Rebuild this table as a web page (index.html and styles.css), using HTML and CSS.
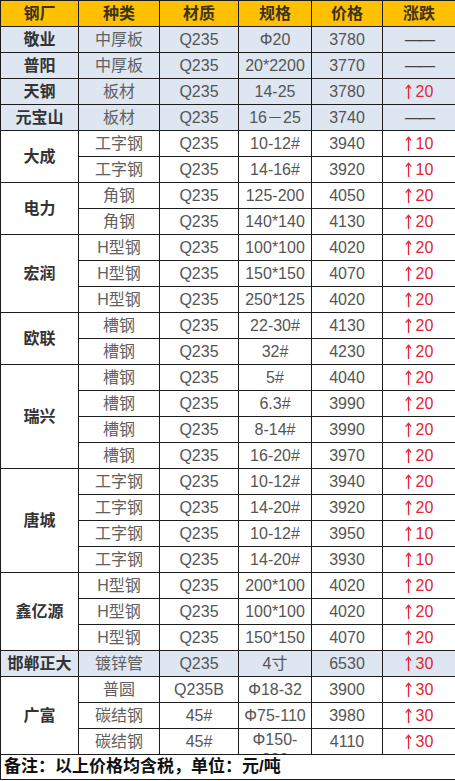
FILE: index.html
```html
<!DOCTYPE html>
<html lang="zh">
<head>
<meta charset="utf-8">
<title>钢材价格</title>
<link rel="stylesheet" href="styles.css">
</head>
<body>
<table class="price">
<colgroup>
<col class="c1"><col class="c2"><col class="c3"><col class="c4"><col class="c5"><col class="c6">
</colgroup>
<thead>
<tr class="head"><th>钢厂</th><th>种类</th><th>材质</th><th>规格</th><th>价格</th><th>涨跌</th></tr>
</thead>
<tbody>
<tr class="blue"><td class="mill">敬业</td><td class="cjk">中厚板</td><td>Q235</td><td>Φ20</td><td>3780</td><td class="flat">——</td></tr>
<tr class="blue"><td class="mill">普阳</td><td class="cjk">中厚板</td><td>Q235</td><td>20*2200</td><td>3770</td><td class="flat">——</td></tr>
<tr class="blue"><td class="mill">天钢</td><td class="cjk">板材</td><td>Q235</td><td>14-25</td><td>3780</td><td class="up"><svg class="arr" viewBox="0 0 7 15" aria-label="↑"><path d="M3.5 15V1.2M0.8 4.6L3.5 1.2L6.2 4.6"/></svg>20</td></tr>
<tr class="blue"><td class="mill">元宝山</td><td class="cjk">板材</td><td>Q235</td><td>16－25</td><td>3740</td><td class="flat">——</td></tr>

<tr><td class="mill" rowspan="2">大成</td><td class="cjk">工字钢</td><td>Q235</td><td>10-12#</td><td>3940</td><td class="up"><svg class="arr" viewBox="0 0 7 15" aria-label="↑"><path d="M3.5 15V1.2M0.8 4.6L3.5 1.2L6.2 4.6"/></svg>10</td></tr>
<tr><td class="cjk">工字钢</td><td>Q235</td><td>14-16#</td><td>3920</td><td class="up"><svg class="arr" viewBox="0 0 7 15" aria-label="↑"><path d="M3.5 15V1.2M0.8 4.6L3.5 1.2L6.2 4.6"/></svg>10</td></tr>

<tr><td class="mill" rowspan="2">电力</td><td class="cjk">角钢</td><td>Q235</td><td>125-200</td><td>4050</td><td class="up"><svg class="arr" viewBox="0 0 7 15" aria-label="↑"><path d="M3.5 15V1.2M0.8 4.6L3.5 1.2L6.2 4.6"/></svg>20</td></tr>
<tr><td class="cjk">角钢</td><td>Q235</td><td>140*140</td><td>4130</td><td class="up"><svg class="arr" viewBox="0 0 7 15" aria-label="↑"><path d="M3.5 15V1.2M0.8 4.6L3.5 1.2L6.2 4.6"/></svg>20</td></tr>

<tr><td class="mill" rowspan="3">宏润</td><td class="cjk">H型钢</td><td>Q235</td><td>100*100</td><td>4020</td><td class="up"><svg class="arr" viewBox="0 0 7 15" aria-label="↑"><path d="M3.5 15V1.2M0.8 4.6L3.5 1.2L6.2 4.6"/></svg>20</td></tr>
<tr><td class="cjk">H型钢</td><td>Q235</td><td>150*150</td><td>4070</td><td class="up"><svg class="arr" viewBox="0 0 7 15" aria-label="↑"><path d="M3.5 15V1.2M0.8 4.6L3.5 1.2L6.2 4.6"/></svg>20</td></tr>
<tr><td class="cjk">H型钢</td><td>Q235</td><td>250*125</td><td>4020</td><td class="up"><svg class="arr" viewBox="0 0 7 15" aria-label="↑"><path d="M3.5 15V1.2M0.8 4.6L3.5 1.2L6.2 4.6"/></svg>20</td></tr>

<tr><td class="mill" rowspan="2">欧联</td><td class="cjk">槽钢</td><td>Q235</td><td>22-30#</td><td>4130</td><td class="up"><svg class="arr" viewBox="0 0 7 15" aria-label="↑"><path d="M3.5 15V1.2M0.8 4.6L3.5 1.2L6.2 4.6"/></svg>20</td></tr>
<tr><td class="cjk">槽钢</td><td>Q235</td><td>32#</td><td>4230</td><td class="up"><svg class="arr" viewBox="0 0 7 15" aria-label="↑"><path d="M3.5 15V1.2M0.8 4.6L3.5 1.2L6.2 4.6"/></svg>20</td></tr>

<tr><td class="mill" rowspan="4">瑞兴</td><td class="cjk">槽钢</td><td>Q235</td><td>5#</td><td>4040</td><td class="up"><svg class="arr" viewBox="0 0 7 15" aria-label="↑"><path d="M3.5 15V1.2M0.8 4.6L3.5 1.2L6.2 4.6"/></svg>20</td></tr>
<tr><td class="cjk">槽钢</td><td>Q235</td><td>6.3#</td><td>3990</td><td class="up"><svg class="arr" viewBox="0 0 7 15" aria-label="↑"><path d="M3.5 15V1.2M0.8 4.6L3.5 1.2L6.2 4.6"/></svg>20</td></tr>
<tr><td class="cjk">槽钢</td><td>Q235</td><td>8-14#</td><td>3990</td><td class="up"><svg class="arr" viewBox="0 0 7 15" aria-label="↑"><path d="M3.5 15V1.2M0.8 4.6L3.5 1.2L6.2 4.6"/></svg>20</td></tr>
<tr><td class="cjk">槽钢</td><td>Q235</td><td>16-20#</td><td>3970</td><td class="up"><svg class="arr" viewBox="0 0 7 15" aria-label="↑"><path d="M3.5 15V1.2M0.8 4.6L3.5 1.2L6.2 4.6"/></svg>20</td></tr>

<tr><td class="mill" rowspan="4">唐城</td><td class="cjk">工字钢</td><td>Q235</td><td>10-12#</td><td>3940</td><td class="up"><svg class="arr" viewBox="0 0 7 15" aria-label="↑"><path d="M3.5 15V1.2M0.8 4.6L3.5 1.2L6.2 4.6"/></svg>20</td></tr>
<tr><td class="cjk">工字钢</td><td>Q235</td><td>14-20#</td><td>3920</td><td class="up"><svg class="arr" viewBox="0 0 7 15" aria-label="↑"><path d="M3.5 15V1.2M0.8 4.6L3.5 1.2L6.2 4.6"/></svg>20</td></tr>
<tr><td class="cjk">工字钢</td><td>Q235</td><td>10-12#</td><td>3950</td><td class="up"><svg class="arr" viewBox="0 0 7 15" aria-label="↑"><path d="M3.5 15V1.2M0.8 4.6L3.5 1.2L6.2 4.6"/></svg>10</td></tr>
<tr><td class="cjk">工字钢</td><td>Q235</td><td>14-20#</td><td>3930</td><td class="up"><svg class="arr" viewBox="0 0 7 15" aria-label="↑"><path d="M3.5 15V1.2M0.8 4.6L3.5 1.2L6.2 4.6"/></svg>10</td></tr>

<tr><td class="mill" rowspan="3">鑫亿源</td><td class="cjk">H型钢</td><td>Q235</td><td>200*100</td><td>4020</td><td class="up"><svg class="arr" viewBox="0 0 7 15" aria-label="↑"><path d="M3.5 15V1.2M0.8 4.6L3.5 1.2L6.2 4.6"/></svg>20</td></tr>
<tr><td class="cjk">H型钢</td><td>Q235</td><td>100*100</td><td>4020</td><td class="up"><svg class="arr" viewBox="0 0 7 15" aria-label="↑"><path d="M3.5 15V1.2M0.8 4.6L3.5 1.2L6.2 4.6"/></svg>20</td></tr>
<tr><td class="cjk">H型钢</td><td>Q235</td><td>150*150</td><td>4070</td><td class="up"><svg class="arr" viewBox="0 0 7 15" aria-label="↑"><path d="M3.5 15V1.2M0.8 4.6L3.5 1.2L6.2 4.6"/></svg>20</td></tr>

<tr class="blue"><td class="mill">邯郸正大</td><td class="cjk">镀锌管</td><td>Q235</td><td>4寸</td><td>6530</td><td class="up"><svg class="arr" viewBox="0 0 7 15" aria-label="↑"><path d="M3.5 15V1.2M0.8 4.6L3.5 1.2L6.2 4.6"/></svg>30</td></tr>

<tr><td class="mill" rowspan="3">广富</td><td class="cjk">普圆</td><td>Q235B</td><td>Φ18-32</td><td>3900</td><td class="up"><svg class="arr" viewBox="0 0 7 15" aria-label="↑"><path d="M3.5 15V1.2M0.8 4.6L3.5 1.2L6.2 4.6"/></svg>30</td></tr>
<tr><td class="cjk">碳结钢</td><td>45#</td><td>Φ75-110</td><td>3980</td><td class="up"><svg class="arr" viewBox="0 0 7 15" aria-label="↑"><path d="M3.5 15V1.2M0.8 4.6L3.5 1.2L6.2 4.6"/></svg>30</td></tr>
<tr><td class="cjk">碳结钢</td><td>45#</td><td><div class="clip">Φ150-<br>220</div></td><td>4110</td><td class="up"><svg class="arr" viewBox="0 0 7 15" aria-label="↑"><path d="M3.5 15V1.2M0.8 4.6L3.5 1.2L6.2 4.6"/></svg>30</td></tr>
</tbody>
<tfoot>
<tr class="foot"><td colspan="6">备注：以上价格均含税，单位：元/吨</td></tr>
</tfoot>
</table>
</body>
</html>
```

FILE: styles.css
```css
html, body {
  margin: 0;
  padding: 0;
  background: #ffffff;
}

.price {
  width: 455px;
  table-layout: fixed;
  border-collapse: collapse;
  font-family: "Liberation Sans", "Noto Sans CJK SC", sans-serif;
  font-size: 16px;
  color: #555555;
}

.c1 { width: 78px; }
.c2 { width: 81px; }
.c3 { width: 79px; }
.c4 { width: 73px; }
.c5 { width: 71px; }
.c6 { width: 73px; }

.price th,
.price td {
  border: 1px solid #1c1c1c;
  height: 25px;
  padding: 0;
  text-align: center;
  vertical-align: middle;
  line-height: 20px;
  white-space: nowrap;
  overflow: hidden;
}

.head th {
  background: #ffc000;
  color: #3b3320;
  font-weight: bold;
}

.blue td {
  background: #dde6f1;
}

.mill {
  font-weight: bold;
  color: #333333;
}

.cjk {
  color: #606060;
}

.up {
  color: #e0263a;
}

.arr {
  width: 7px;
  height: 15px;
  margin-right: 4px;
  vertical-align: -2px;
  fill: none;
  stroke: #e0263a;
  stroke-width: 1.3;
}

.flat {
  color: #444444;
  letter-spacing: -2px;
}

.clip {
  height: 25px;
  overflow: hidden;
  line-height: 20px;
  padding-top: 1px;
  box-sizing: border-box;
}

.foot td {
  text-align: left;
  font-weight: bold;
  font-size: 17px;
  color: #111111;
  padding-left: 3px;
  height: 24px;
}
```
